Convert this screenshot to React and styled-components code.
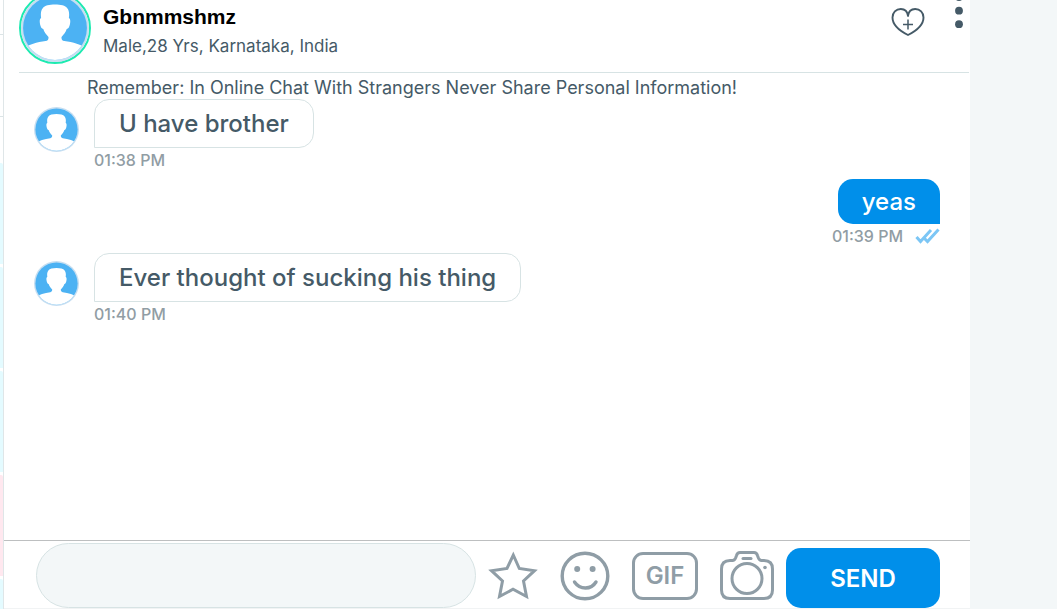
import React from "react";
import styled, { createGlobalStyle } from "styled-components";

const GlobalStyle = createGlobalStyle`
* { box-sizing: border-box; }
body {
  margin: 0;
  background: #f3f7f8;
  font-family: Inter, "Liberation Sans", sans-serif;
  color: #455a67;
  overflow: hidden;
}
button {
  padding: 0;
  border: 0;
  background: none;
  cursor: pointer;
  font-family: inherit;
}
svg { display: block; }
`;

const Page = styled.div`
  display: flex;
  height: 100vh;
  padding-right: 87px;
  overflow: hidden;
`;

const UserStrip = styled.aside`
  display: flex;
  flex-direction: column;
  width: 4px;
  flex-shrink: 0;
  background: #fff;
  border-right: 1px solid #dfe6e8;
`;

const StripTop = styled.div`
  height: ${(p) => p.$height}px;
  flex-shrink: 0;
  border-bottom: ${(p) => (p.$last ? "0" : "1px solid #dbe4e6")};
`;

const StripItem = styled.div`
  height: 101px;
  margin-bottom: 3px;
  flex-shrink: 0;
  border-top-right-radius: 2px;
  background: ${(p) => (p.$pink ? "#ffe8ef" : "#e4fbff")};
`;

const Chat = styled.main`
  display: flex;
  flex: 1;
  flex-direction: column;
  min-width: 0;
  background: #fff;
`;

const Header = styled.header`
  display: flex;
  align-items: flex-start;
  height: 81px;
  margin: -8px 1px 0 15px;
  flex-shrink: 0;
  border-bottom: 1px solid #d7e3e4;
`;

const HeaderInfo = styled.div`
  flex: 1;
  padding: 12px 0 0 12px;
`;

const Name = styled.h1`
  margin: 0;
  font: bold 21px/26px "Liberation Sans", Arial, sans-serif;
  color: #000;
`;

const Details = styled.p`
  margin: 4px 0 0;
  font-size: 17px;
  line-height: 24px;
`;

const FavoriteButton = styled.button`
  margin: 15px 29px 0 0;
`;

const MenuButton = styled.button`
  margin: 0 5px 0 0;
`;

const Ring = styled.div`
  width: 72px;
  height: 72px;
  border: 2px solid #1deab0;
  border-radius: 50%;
`;

const Messages = styled.section`
  display: flex;
  flex: 1;
  flex-direction: column;
  min-height: 0;
  padding: 3px 30px 0;
`;

const Notice = styled.p`
  margin: 0 0 0 53px;
  font-size: 18px;
  line-height: 23px;
  white-space: nowrap;
`;

const Row = styled.div`
  display: flex;
  justify-content: ${(p) => (p.$mine ? "flex-end" : "flex-start")};
  gap: 15px;
  margin-bottom: ${(p) => (p.$mine ? 5 : 7)}px;
`;

const RowAvatar = styled.div`
  width: 45px;
  height: 45px;
  margin-top: 8px;
`;

const Bubble = styled.div`
  padding: 0 24px;
  border: ${(p) => (p.$mine ? "0" : "1px solid #d7e3e4")};
  border-radius: ${(p) => (p.$mine ? "15px 15px 0 15px" : "15px 15px 15px 0")};
  background: ${(p) => (p.$mine ? "#008fea" : "#fff")};
  color: ${(p) => (p.$mine ? "#fff" : "#455a67")};
  font-size: 24px;
  font-weight: 500;
  line-height: ${(p) => (p.$mine ? 45 : 47)}px;
`;

const Column = styled.div`
  display: flex;
  flex-direction: column;
  align-items: ${(p) => (p.$mine ? "flex-end" : "flex-start")};
`;

const Time = styled.div`
  display: flex;
  align-items: center;
  gap: 12px;
  height: 24px;
  font-size: 16px;
  font-weight: 500;
  color: #919da4;
`;

const Composer = styled.form`
  display: flex;
  align-items: center;
  height: 69px;
  padding: 2px 30px 0 32px;
  flex-shrink: 0;
  border-top: 1px solid #bdbfc0;
  border-bottom: 1px solid #f1f3f4;
`;

const TextInput = styled.input`
  flex: 1;
  min-width: 0;
  height: 65px;
  padding: 0 28px;
  border: 1px solid #d7e3e4;
  border-radius: 33px;
  background: #f3f7f8;
  font: 500 20px Inter, sans-serif;
  color: #455a67;
  outline: none;
`;

const Tools = styled.div`
  display: flex;
  align-items: center;
  gap: 22px;
  margin: 0 12px;
`;

const ToolButton = styled.button`
  color: #8f9da6;
`;

const GifButton = styled(ToolButton)`
  width: 66px;
  height: 48px;
  border: 3px solid #8f9da6;
  border-radius: 11px;
  font-size: 24px;
  font-weight: 600;
`;

const SendButton = styled.button`
  width: 154px;
  height: 60px;
  margin-top: 5px;
  border-radius: 15px;
  background: #008fea;
  color: #fff;
  font-size: 24px;
  font-weight: 600;
`;

const Avatar = () => (
  <svg width="100%" height="100%" viewBox="0 0 72 72" aria-hidden="true">
    <defs>
      <clipPath id="face">
        <circle cx="36" cy="36" r="33.8" />
      </clipPath>
    </defs>
    <circle cx="36" cy="36" r="36" fill="#c6def1" />
    <g clipPath="url(#face)">
      <rect width="72" height="72" fill="#4cb2f3" />
      <path
        fill="#fff"
        d="M36 11c-6 0-11 1-13 4c-2 2.500-2.300 6-1.700 10.500c-1.800 .8-1.700 4-1 7c.6 2.500 1.500 4.200 3.300 4.600c1 3.400 3 5.700 5.500 8.400c.2 2.500-.6 3.700-3 4.300C17 51 8 53.500 2 58v16h68V58c-6-4.500-15-7-24.100-8.200c-2.400-.6-3.200-1.800-3-4.300c2.500-2.700 4.500-5 5.500-8.400c1.800-.4 2.700-2.100 3.300-4.600c.7-3 .8-6.200-1-7C51.300 21 51 17.500 49 15C47 12 42 11 36 11z"
      />
    </g>
  </svg>
);

const HeartIcon = () => (
  <svg width="34" height="30" viewBox="0 0 34 30" fill="none" stroke="#455a67" strokeWidth="1.900" strokeLinejoin="round">
    <path d="M17 9C16.500 4.800 13.800 2 9.800 2C5 2 1.500 5.500 1.500 10.500C1.500 18.500 9 24 17 28C25 24 32.500 18.500 32.500 10.500C32.500 5.500 29 2 24.200 2C20.200 2 17.500 4.800 17 9z" />
    <path d="M17 12.500v10M12 17.500h10" strokeWidth="1.500" />
  </svg>
);

const DotsIcon = () => (
  <svg width="10" height="38" viewBox="0 0 10 38" fill="#455a67">
    <circle cx="5" cy="5" r="3.900" />
    <circle cx="5" cy="18.700" r="3.900" />
    <circle cx="5" cy="32.200" r="3.900" />
  </svg>
);

const TicksIcon = () => (
  <svg width="25" height="16" viewBox="0 0 25 16" fill="none" stroke="#7cc6f5" strokeWidth="3">
    <path d="M1.500 9L5.500 13.500L16 2" />
    <path d="M9.500 10.500L12.500 13.500L23.500 1.500" />
  </svg>
);

const StarIcon = () => (
  <svg width="50" height="50" viewBox="0 0 50 50" fill="none" stroke="currentColor" strokeWidth="3">
    <path d="M25.300 4L31.300 17.500L46.500 19.700L35.500 30L38.500 45.500L25 38.300L11.500 45.500L14.500 30L3.500 19.700L19 17.500z" />
  </svg>
);

const SmileIcon = () => (
  <svg width="50" height="50" viewBox="0 0 50 50" fill="none" stroke="currentColor" strokeWidth="3.400">
    <circle cx="25" cy="25" r="22.800" />
    <circle cx="17.200" cy="18" r="3" fill="currentColor" stroke="none" />
    <circle cx="32.600" cy="18" r="3" fill="currentColor" stroke="none" />
    <path d="M14.500 31C20 39 31 39 36 31" strokeLinecap="round" />
  </svg>
);

const CameraIcon = () => (
  <svg width="54" height="49" viewBox="0 0 54 49" fill="none" stroke="currentColor" strokeWidth="3">
    <path d="M10 9.500h2.500c2 0 2.500-1 3.300-3l.7-2c.6-2 1.500-3 3.500-3h14c2 0 2.900 1 3.500 3l.7 2c.8 2 1.300 3 3.300 3H44c5.500 0 8.500 3 8.500 8.500V39c0 5.500-3 8.500-8.500 8.500H10c-5.500 0-8.500-3-8.500-8.500V18c0-5.500 3-8.500 8.500-8.500z" />
    <circle cx="27" cy="27.500" r="15" />
    <path d="M23 7.500h8" strokeLinecap="round" />
    <circle cx="45" cy="16.500" r="1.800" fill="currentColor" stroke="none" />
  </svg>
);

const messages = [
  { text: "U have brother", time: "01:38 PM" },
  { text: "yeas", time: "01:39 PM", mine: true },
  { text: "Ever thought of sucking his thing", time: "01:40 PM" },
];

const Message = ({ text, time, mine }) => (
  <Row $mine={mine}>
    {!mine && (
      <RowAvatar>
        <Avatar />
      </RowAvatar>
    )}
    <Column $mine={mine}>
      <Bubble $mine={mine}>{text}</Bubble>
      <Time>
        {time}
        {mine && <TicksIcon />}
      </Time>
    </Column>
  </Row>
);

const App = () => {
  return (
    <>
      <GlobalStyle />
      <Page>
        <UserStrip>
          <StripTop $height={35} />
          <StripTop $height={82} />
          <StripTop $height={46} $last />
          <StripItem />
          <StripItem />
          <StripItem />
          <StripItem $pink />
          <StripItem />
        </UserStrip>
        <Chat>
          <Header>
            <Ring>
              <Avatar />
            </Ring>
            <HeaderInfo>
              <Name>Gbnmmshmz</Name>
              <Details>Male,28 Yrs, Karnataka, India</Details>
            </HeaderInfo>
            <FavoriteButton type="button" aria-label="Add to favourites">
              <HeartIcon />
            </FavoriteButton>
            <MenuButton type="button" aria-label="Menu">
              <DotsIcon />
            </MenuButton>
          </Header>
          <Messages>
            <Notice>Remember: In Online Chat With Strangers Never Share Personal Information!</Notice>
            {messages.map((m) => (
              <Message key={m.time} {...m} />
            ))}
          </Messages>
          <Composer onSubmit={(e) => e.preventDefault()}>
            <TextInput type="text" aria-label="Message" />
            <Tools>
              <ToolButton type="button" aria-label="Stickers">
                <StarIcon />
              </ToolButton>
              <ToolButton type="button" aria-label="Emoji">
                <SmileIcon />
              </ToolButton>
              <GifButton type="button">GIF</GifButton>
              <ToolButton type="button" aria-label="Photo">
                <CameraIcon />
              </ToolButton>
            </Tools>
            <SendButton type="submit">SEND</SendButton>
          </Composer>
        </Chat>
      </Page>
    </>
  );
};

export default App;
